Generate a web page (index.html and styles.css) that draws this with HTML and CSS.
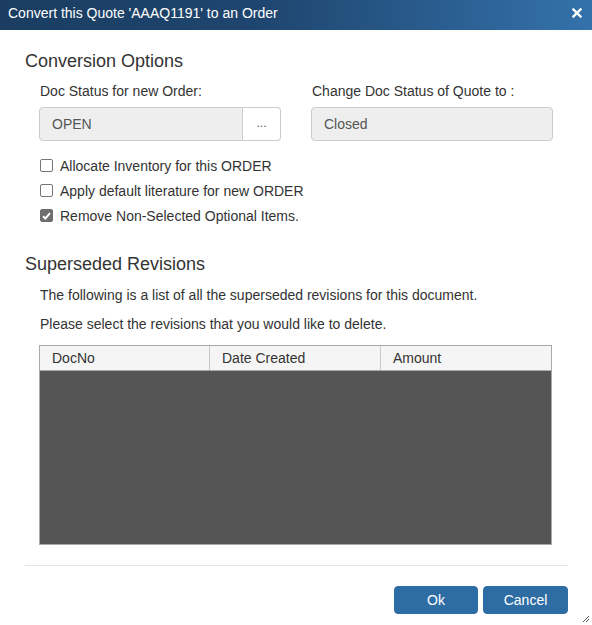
FILE: index.html
```html
<!DOCTYPE html>
<html>
<head>
<meta charset="utf-8">
<link rel="stylesheet" href="styles.css">
</head>
<body>
<div class="dialog">
  <div class="titlebar">
    <span class="title">Convert this Quote 'AAAQ1191' to an Order</span>
    <svg class="close" width="10" height="10" viewBox="0 0 10 10"><path d="M1.5 1.5 L8.5 8.5 M8.5 1.5 L1.5 8.5" stroke="#fff" stroke-width="2.4" stroke-linecap="square"/></svg>
  </div>
  <div class="content">
    <h2 class="section-title">Conversion Options</h2>
    <div class="section-body">
      <div class="fields">
        <div class="field">
          <label class="label">Doc Status for new Order:</label>
          <div class="input-group">
            <div class="input">OPEN</div>
            <div class="btn-dots">...</div>
          </div>
        </div>
        <div class="field">
          <label class="label">Change Doc Status of Quote to :</label>
          <div class="input full">Closed</div>
        </div>
      </div>
      <div class="checks">
        <label class="check"><span class="box"></span>Allocate Inventory for this ORDER</label>
        <label class="check"><span class="box"></span>Apply default literature for new ORDER</label>
        <label class="check"><span class="box checked"><svg width="9" height="8" viewBox="0 0 9 8"><path d="M1 4.2 L3.4 6.5 L8 1.2" stroke="#fff" stroke-width="2" fill="none"/></svg></span>Remove Non-Selected Optional Items.</label>
      </div>
    </div>
    <h2 class="section-title second">Superseded Revisions</h2>
    <div class="section-body">
      <p class="text first">The following is a list of all the superseded revisions for this document.</p>
      <p class="text">Please select the revisions that you would like to delete.</p>
      <div class="grid">
        <div class="grid-head">
          <div class="col c1">DocNo</div>
          <div class="col c2">Date Created</div>
          <div class="col c3">Amount</div>
        </div>
        <div class="grid-body"></div>
      </div>
    </div>
    <div class="divider"></div>
    <div class="actions">
      <button class="btn ok">Ok</button>
      <button class="btn cancel">Cancel</button>
    </div>
  </div>
  <svg class="resize" width="8" height="8" viewBox="0 0 8 8"><path d="M7 1 L1 7 M7 4 L4 7" stroke="#555" stroke-width="1"/></svg>
</div>
</body>
</html>
```
FILE: styles.css
```css
html, body {
  margin: 0;
  padding: 0;
  background: #fff;
}
body {
  font-family: "Liberation Sans", Arial, sans-serif;
  color: #333;
  font-size: 14px;
}
.dialog {
  position: relative;
  width: 592px;
  height: 625px;
  overflow: hidden;
}
.titlebar {
  height: 30px;
  background: linear-gradient(to right, #1a3d61 0%, #1f4670 45%, #3472ab 100%);
  display: flex;
  align-items: center;
  justify-content: space-between;
  padding: 0 10px 0 8px;
  box-sizing: border-box;
}
.title {
  color: #fff;
  font-size: 14px;
  line-height: 16px;
  margin-top: -5px;
}
.close {
  margin-top: -5px;
}
.content {
  padding: 0 24px 0 25px;
}
.section-title {
  font-weight: normal;
  font-size: 18px;
  line-height: 20px;
  margin: 21px 0 0 0;
  color: #333;
}
.section-title.second {
  margin-top: 30px;
}
.section-body {
  padding-left: 14px;
}
.fields {
  display: flex;
  gap: 30px;
  margin-top: 12px;
}
.field {
  width: 242px;
}
.label {
  display: block;
  font-size: 14px;
  line-height: 16px;
  margin-bottom: 8px;
  padding-left: 1px;
}
.input-group {
  display: flex;
  height: 34px;
}
.input {
  box-sizing: border-box;
  height: 34px;
  background: #eee;
  border: 1px solid #ccc;
  border-radius: 4px;
  padding: 0 12px;
  line-height: 32px;
  color: #555;
  font-size: 14px;
}
.input-group .input {
  flex: 1;
  border-radius: 4px 0 0 4px;
}
.input.full {
  width: 242px;
}
.btn-dots {
  box-sizing: border-box;
  width: 38px;
  height: 34px;
  border: 1px solid #ccc;
  border-left: none;
  border-radius: 0 4px 4px 0;
  background: #fff;
  text-align: center;
  line-height: 30px;
  font-size: 12px;
  color: #555;
}
.checks {
  margin-top: 16px;
  display: flex;
  flex-direction: column;
  gap: 8px;
}
.check {
  display: flex;
  align-items: center;
  font-size: 14px;
  line-height: 16px;
  height: 17px;
}
.box {
  box-sizing: border-box;
  width: 13px;
  height: 13px;
  border: 1px solid #767676;
  border-radius: 2px;
  margin: 0 7px 0 1px;
  background: #fff;
  display: flex;
  align-items: center;
  justify-content: center;
}
.box.checked {
  background: #6e6e6e;
  border-color: #6e6e6e;
}
.text {
  margin: 0;
  font-size: 14px;
  line-height: 16px;
  padding-left: 1px;
}
.text.first {
  margin-top: 13px;
}
.text + .text {
  margin-top: 13px;
}
.grid {
  margin-top: 13px;
  width: 513px;
  box-sizing: border-box;
  border: 1px solid #a9a9a9;
}
.grid-head {
  display: flex;
  height: 24px;
  background: #f5f5f5;
  border-bottom: 1px solid #a9a9a9;
}
.col {
  box-sizing: border-box;
  padding-left: 12px;
  line-height: 24px;
  font-size: 14px;
  color: #333;
}
.c1 { width: 170px; border-right: 1px solid #c8c8c8; }
.c2 { width: 171px; border-right: 1px solid #c8c8c8; }
.c3 { flex: 1; }
.grid-body {
  height: 173px;
  background: #555;
}
.divider {
  margin-top: 20px;
  height: 1px;
  background: #e5e5e5;
  width: 543px;
}
.actions {
  display: flex;
  justify-content: flex-end;
  gap: 5px;
  margin-top: 20px;
  padding-right: 0;
}
.btn {
  height: 28px;
  border: 1px solid #2e6da4;
  border-radius: 4px;
  background: #2e6da4;
  color: #fff;
  font-family: "Liberation Sans", Arial, sans-serif;
  font-size: 14px;
  padding: 0;
}
.ok { width: 84px; }
.cancel { width: 85px; }
.resize {
  position: absolute;
  right: 2px;
  bottom: 2px;
}
```
